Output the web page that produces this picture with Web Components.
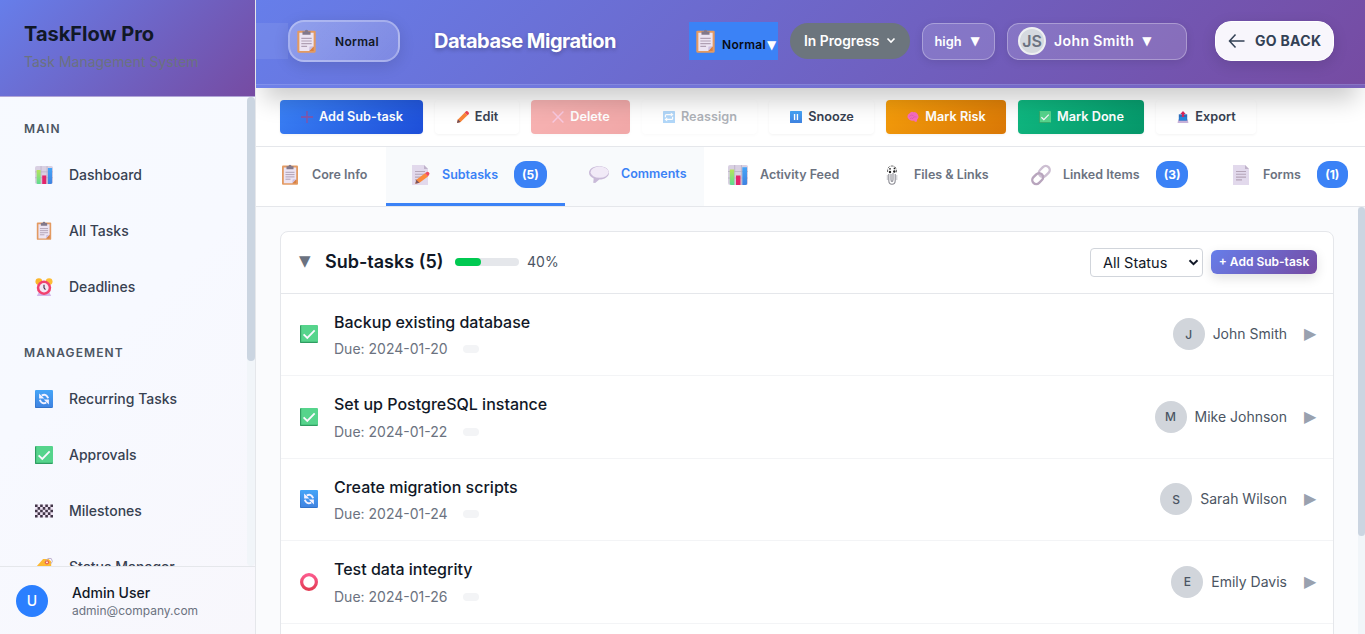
<!DOCTYPE html>
<html lang="en">
<head>
<meta charset="utf-8">
<title>TaskFlow Pro</title>
<style>
html,body{margin:0;height:100%;overflow:hidden}
body{font-family:Inter,"Liberation Sans",sans-serif;color:#111827;background:#fff;-webkit-font-smoothing:antialiased}
</style>
</head>
<body>
<tf-app></tf-app>
<script>
const define = (name, css, html) => customElements.define(name, class extends HTMLElement {
  constructor() {
    super();
    this.attachShadow({mode: 'open'}).innerHTML =
      `<style>*{box-sizing:border-box}${css}</style>` + (typeof html === 'function' ? html(this) : html);
  }
});

const paper = `<path d="M2 0h12l4 4v16H2z" fill="#e2d9ec"/><path d="M14 0l4 4h-4z" fill="#bfb2ca"/><path d="M5 6.5h10M5 9.3h10M5 12.1h10M5 14.9h6" stroke="#b5a5b8" stroke-width="1.1"/>`;
const ICONS = {
  chart: `<rect width="20" height="20" rx="2" fill="#d9d0e2"/><path d="M0 6.5h20M0 13h20M6.7 0v20M13.4 0v20" stroke="#b9b0c4" stroke-width=".8"/><path d="M1.8 4.5h4.4V20H3a1.5 1.5 0 0 1-1.2-1.5z" fill="url(#g1)"/><path d="M8 10.5h4.5V20H8z" fill="#e3246b"/><path d="M14.3 2.2H19V18.5q0 1.5-1.5 1.5h-3.2z" fill="url(#g2)"/>`,
  clip: `<rect x="2" y="0.6" width="16" height="19.2" rx="1" fill="#e39a62"/><path d="M3.8 2.4h12.4v11.8l-3.6 4H3.8z" fill="#ece4f3"/><path d="M16.2 14.2v4h-4z" fill="#d88142"/><path d="M12.3 18.2l.3-3.8 3.6-.2z" fill="#cdbfe0"/><path d="M6.5 1.2h2a1.5 1.5 0 0 1 3 0h2v3h-7z" fill="#82788b"/><path d="M5.5 7.3h9M5.5 9.6h9M5.5 11.9h9M5.5 14.2h5" stroke="#b0a0b4" stroke-width="1"/>`,
  clock: `<path d="M4 16h12l2 4H2z" fill="#d3b7ea"/><circle cx="4.3" cy="4" r="3.8" fill="#fbb62c"/><circle cx="15.7" cy="4" r="3.8" fill="#fdbd35"/><circle cx="10" cy="10.8" r="8" fill="#f2416f"/><circle cx="10" cy="10.8" r="5.2" fill="#f3e7f5"/><path d="M10 7.4v3.6l1.6 1.8" stroke="#45334f" stroke-width="1.3" fill="none"/>`,
  cycle: `<rect width="20" height="20" rx="1.2" fill="url(#g2)"/><path d="M0 1v18q0 1 1 1h18l-1-1H1z" fill="#2b69b9" opacity=".6"/><path d="M7.5 6Q12.8 3.6 14.6 9.2" fill="none" stroke="#f4f2ff" stroke-width="2.2"/><path d="M4.6 3.8v5.6h5.8z" fill="#f4f2ff"/><g transform="rotate(180 10 10)"><path d="M7.5 6Q12.8 3.6 14.6 9.2" fill="none" stroke="#f4f2ff" stroke-width="2.2"/><path d="M4.6 3.8v5.6h5.8z" fill="#f4f2ff"/></g>`,
  check: `<rect width="20" height="20" rx="1.2" fill="#56d48c"/><path d="M0 1v18q0 1 1 1h18l1-1.3H1.3V0z" fill="#2f9c61"/><path d="M4 10.4l4.1 4L16.3 6" fill="none" stroke="#fbf8ff" stroke-width="2"/>`,
  flag: `<rect y="2.8" width="20" height="14.4" fill="#efe4f4"/><path d="M0 4.2h20M0 10h20M0 15.8h20" stroke="#413547" stroke-width="2.9" stroke-dasharray="2.86"/><path d="M2.86 7.1H20M2.86 12.9H20" stroke="#413547" stroke-width="2.9" stroke-dasharray="2.86"/>`,
  tag: `<path d="M2 9l7-8h6l3 3v6l-8 9-8-8z" fill="#fdb932"/><circle cx="13.3" cy="4.8" r="2.4" fill="#e86149"/><circle cx="13.3" cy="4.8" r="1" fill="#fff"/><path d="M12 3Q14-.6 18 .5q3 3.5-.5 6" fill="none" stroke="#b9aacb" stroke-width="1"/>`,
  memo: `${paper}<path d="M5.3 18.8l1-4L15 8.2l3 3.3-8.5 6.3z" fill="#fb8a3c"/><path d="M15 8.2l1.8-1.3q2.2-.5 2.8 1.8L18 11.5z" fill="#f0495f"/><path d="M5.3 18.8l1-4 3.2 3z" fill="#7c5662"/>`,
  page: paper,
  bubble: `<path d="M10 2.2c5.8 0 10 2.7 10 6.6s-4.2 6.8-9.7 6.8L6.2 19l-2-.2.5-4.4C1.7 13.2 0 11.2 0 8.8 0 4.9 4.2 2.2 10 2.2z" fill="#c9bad8"/><ellipse cx="10.6" cy="8.2" rx="9" ry="5.6" fill="#f1eaf7"/>`,
  files: `<path d="M6.8 9v6.500q0 3.800 3.200 3.800t3.200-3.800V9M9 9v5.500q0 2 1 2t1-2V8" fill="none" stroke="#8c8c94" stroke-width="1.100"/><path d="M5.600 7V5Q6 1 10 1q4 0 4.400 4v3" fill="none" stroke="#666" stroke-width="1" stroke-dasharray="2.500 1.200"/><circle cx="8" cy="3.800" r=".9" fill="#222"/><circle cx="12.500" cy="3.400" r=".9" fill="#222"/><circle cx="8" cy="7" r="1.200" fill="#222"/><circle cx="12.300" cy="6.500" r="1.200" fill="#222"/><path d="M5.300 10v5M14.800 10v5" stroke="#b5b5ba" stroke-width=".8"/>`,
  link: `<g fill="none" stroke-width="2.400"><rect x="7.300" y="2.400" width="12" height="8" rx="4" transform="rotate(-45 13.300 6.400)" stroke="#cdbfd2"/><rect x=".700" y="9.600" width="12" height="8" rx="4" transform="rotate(-45 6.700 13.600)" stroke="#b8a5bd"/></g>`,
  plus: `<path d="M10 0v20M0 10h20" stroke="#8f52a0" stroke-width="2.200"/>`,
  pencil: `<path d="M0 20l1.500-6L13 2.500l4.500 4.500L6 18.500z" fill="#fa8537"/><path d="M13 2.500l2-2q2-1 4 1.300t.5 3.700l-2 1.500z" fill="#ee4454"/><path d="M0 20l1.500-6L6 18.500z" fill="#6b4c59"/>`,
  cross: `<path d="M1 1l18 18M19 1L1 19" stroke="#f27ab4" stroke-width="2.400"/>`,
  repeat: `<rect width="20" height="20" rx="1" fill="#3f9cf1"/><path d="M4 10.500V7.500Q4 6 5.500 6H15M16 9.500v3q0 1.500-1.500 1.500H5" fill="none" stroke="#fff" stroke-width="2"/><path d="M13 2.500L17.500 6 13 9.500zM7 10.500L2.500 14 7 17.500z" fill="#fff"/>`,
  pause: `<rect width="20" height="20" rx="1" fill="url(#g2)"/><path d="M7.600 5v10M12.400 5v10" stroke="#fff" stroke-width="2.300"/>`,
  brain: `<path d="M1 11Q0 6 4 4q3-4 7-2 5-1 7 4 3 5-1 8l-1 4h-3l-1-2Q5 18 1 11z" fill="#f66cc0"/><path d="M4 9q3-4 7-1M9 13q2-5 7-3M5 13q3-3 5 0" stroke="#d957b2" stroke-width="1.100" fill="none"/>`,
  export: `<path d="M2 14h16l1 6H1z" fill="#c8b2da"/><path d="M3 5.500h14v10.500H3z" fill="#2f6dbc"/><path d="M4 10h12v5.500H4z" fill="#2687dd"/><path d="M10 0l4.500 5h-2.700V10H8.200V5H5.500z" fill="#d7265e"/>`,
  ring: `<circle cx="10" cy="10" r="8.200" fill="none" stroke="url(#g3)" stroke-width="3.600"/>`
};
const DEFS = `<defs><linearGradient id="g1" x2="0" y2="1"><stop stop-color="#b6e45a"/><stop offset="1" stop-color="#5ddc92"/></linearGradient><linearGradient id="g2" x2="0" y2="1"><stop stop-color="#45a5f8"/><stop offset="1" stop-color="#3f82e0"/></linearGradient><linearGradient id="g3" x2="0" y2="1"><stop stop-color="#fb5a8c"/><stop offset="1" stop-color="#e33d55"/></linearGradient></defs>`;

define('tf-icon', `:host{display:block;flex:none;width:var(--s,18px);height:var(--s,18px)}svg{display:block;width:100%;height:100%;overflow:visible}`,
  el => `<svg viewBox="0 0 20 20">${DEFS}${ICONS[el.getAttribute('name')] || ''}</svg>`);

define('tf-nav-item', `
:host{display:flex;align-items:center;height:48px;margin-bottom:8px;padding-left:35px;font-size:14px;font-weight:500;color:#374151}
tf-icon{margin-right:16px}
span{padding-bottom:1px}`,
  el => `<tf-icon name="${el.getAttribute('icon')}"></tf-icon><span><slot></slot></span>`);

define('tf-nav-section', `
:host{display:block}
h3{margin:0;height:56px;padding:11px 0 0 24px;display:flex;align-items:center;font-size:12px;font-weight:600;letter-spacing:1.1px;color:#4b5563}`,
  el => `<h3>${el.getAttribute('label')}</h3><slot></slot>`);

define('tf-sidebar', `
:host{display:flex;flex-direction:column;flex:none;width:256px;height:100%;border-right:1px solid #e5e7eb;background:linear-gradient(135deg,#f7faff 0%,#f7f9ff 50%,#f8f7fc 100%)}
header{flex:none;height:97px;padding:20px 24px 0;border-bottom:1px solid #b1a5d6;background:linear-gradient(135deg,#667eea,#764ba2)}
h1{margin:0;font-size:20px;line-height:28px;font-weight:700;color:#111827}
header p{margin:4px 0 0;font-size:14px;line-height:20px;color:#6b7280}
.body{flex:1;min-height:0;display:flex;overflow:hidden}
nav{flex:1;margin-top:-2px}
.track{width:8px;background:#f1f5f9;border-radius:4px}
.thumb{height:264px;border-radius:4px;background:#cbd5e1}
footer{flex:none;height:68px;border-top:1px solid #e5e7eb;padding:0 16px;display:flex;align-items:center;gap:24px}
.av{width:32px;height:32px;border-radius:50%;background:#2b7fff;color:#fff;display:flex;align-items:center;justify-content:center;font-size:14px;font-weight:500}
.n{font-size:14px;line-height:20px;font-weight:500}.e{font-size:12px;line-height:16px;color:#6b7280}`,
`<header><h1>TaskFlow Pro</h1><p>Task Management System</p></header>
<div class="body"><nav>
<tf-nav-section label="MAIN"><tf-nav-item icon="chart">Dashboard</tf-nav-item><tf-nav-item icon="clip">All Tasks</tf-nav-item><tf-nav-item icon="clock">Deadlines</tf-nav-item></tf-nav-section>
<tf-nav-section label="MANAGEMENT"><tf-nav-item icon="cycle">Recurring Tasks</tf-nav-item><tf-nav-item icon="check">Approvals</tf-nav-item><tf-nav-item icon="flag">Milestones</tf-nav-item><tf-nav-item icon="tag">Status Manager</tf-nav-item></tf-nav-section>
</nav><div class="track"><div class="thumb"></div></div></div>
<footer><div class="av">U</div><div><div class="n">Admin User</div><div class="e">admin@company.com</div></div></footer>`);

define('tf-header', `
:host{display:flex;align-items:center;flex:none;height:88px;padding-bottom:6px;position:relative;z-index:2;color:#fff;background:linear-gradient(135deg,#667eea,#764ba2);box-shadow:0 20px 25px -8px rgba(0,0,0,.2)}
:host::after{content:"";position:absolute;left:0;right:0;bottom:0;height:3px;background:rgba(130,145,245,.3);border-top:1px solid rgba(255,255,255,.12)}
.band{width:32px;height:36px;background:rgba(255,255,255,.08)}
.type{width:112px;height:42px;border:2px solid rgba(255,255,255,.3);border-radius:16px;background:linear-gradient(135deg,rgba(255,255,255,.28),rgba(255,255,255,.14));box-shadow:0 4px 16px rgba(0,0,0,.12);display:flex;align-items:center;padding-left:5px;color:#111827;font-size:12px;font-weight:600;letter-spacing:.3px}
.type tf-icon{--s:23px;margin-right:17px}
h2{margin:0 0 0 34px;width:255px;font-size:20px;line-height:28px;font-weight:700;letter-spacing:-.5px;white-space:nowrap;text-shadow:0 2px 4px rgba(0,0,0,.25)}
.sel{width:89px;height:38px;background:#3b82f6;display:flex;align-items:center;padding-left:5px;color:#080b14;font-size:12px;font-weight:600;letter-spacing:.3px}
.sel tf-icon{--s:23px;margin-right:5px}.sel span{padding-top:7px}
.tri{font-family:"DejaVu Sans",sans-serif;color:#fff;font-size:12px;font-weight:400;letter-spacing:0;line-height:12px}
.sel .tri{margin-left:1px}
.status{margin-left:12px;width:120px;height:36px;border-radius:18px;background:#6c757d;display:flex;align-items:center;padding:0 14px 1px;justify-content:space-between;font-size:13.8px;font-weight:600}
.glass{height:37px;border:1px solid rgba(255,255,255,.3);border-radius:12px;background:rgba(255,255,255,.15);box-shadow:0 2px 8px rgba(0,0,0,.1);display:flex;align-items:center;font-weight:600}
.pri{margin-left:12px;width:73px;padding-left:11.5px;font-size:12.8px}.pri .tri{margin-left:9px}
.who{margin-left:12px;width:180px;padding-left:10px;font-size:14px;letter-spacing:.4px}.who .tri{margin-left:8px}
.av{width:28px;height:28px;border-radius:50%;border:2px solid rgba(255,255,255,.6);background:#d5d9df;color:#6b7280;display:flex;align-items:center;justify-content:center;font-size:16px;margin-right:8px;letter-spacing:-.2px}
.who span:not(.tri),.back span{padding-bottom:1px}
.back{margin-left:28px;width:119px;height:40px;border-radius:16px;background:#f8f6fc;border:1px solid #fff;box-shadow:0 4px 15px rgba(0,0,0,.12);display:flex;align-items:center;padding-left:12px;gap:9px;color:#334155;font-size:14px;font-weight:700;letter-spacing:.3px;white-space:nowrap}`,
`<div class="band"></div>
<div class="type"><tf-icon name="clip"></tf-icon>Normal</div>
<h2>Database Migration</h2>
<div class="sel"><tf-icon name="clip"></tf-icon><span>Normal</span><span class="tri">▼</span></div>
<div class="status">In Progress<svg width="10" height="7" viewBox="0 0 10 7"><path d="M1.5 1.5L5 5l3.5-3.5" fill="none" stroke="#fff" stroke-width="1.6"/></svg></div>
<div class="glass pri">high<span class="tri">▼</span></div>
<div class="glass who"><div class="av">JS</div><span>John Smith</span><span class="tri">▼</span></div>
<div class="back"><svg width="18" height="16" viewBox="0 0 18 16"><path d="M7.5 1.5L1.500 8l6 6.500M1.500 8H16.500" fill="none" stroke="#334155" stroke-width="1.5"/></svg><span>GO BACK</span></div>`);

define('tf-action', `
:host{display:flex;align-items:center;justify-content:center;gap:6px;height:34px;padding-left:1px;border-radius:4px;font-size:12.7px;font-weight:600;color:#374151;background:rgba(255,255,255,.35);box-shadow:0 1px 3px rgba(0,0,0,.05);white-space:nowrap}
:host([kind]){color:#fff}
:host([kind=blue]){background:linear-gradient(135deg,#3b82f6,#1d4ed8)}
:host([kind=red]){background:linear-gradient(135deg,#ef4444,#dc2626)}
:host([kind=amber]){background:linear-gradient(135deg,#f59e0b,#d97706)}
:host([kind=green]){background:linear-gradient(135deg,#10b981,#059669)}
:host([kind=red]),:host([off]){opacity:.4}
span{padding-bottom:1px}
tf-icon{--s:12px}`,
  el => `<tf-icon name="${el.getAttribute('icon')}"></tf-icon><span><slot></slot></span>`);

define('tf-toolbar', `
:host{display:flex;flex:none;height:59px;padding:12px 24px 0;gap:12px;background:#fff;border-bottom:1px solid #e5e7eb}`,
`<tf-action kind="blue" icon="plus" style="width:143px">Add Sub-task</tf-action>
<tf-action icon="pencil" style="width:84px">Edit</tf-action>
<tf-action kind="red" icon="cross" style="width:99px">Delete</tf-action>
<tf-action off icon="repeat" style="width:115px">Reassign</tf-action>
<tf-action icon="pause" style="width:105px">Snooze</tf-action>
<tf-action kind="amber" icon="brain" style="width:120px">Mark Risk</tf-action>
<tf-action kind="green" icon="check" style="width:126px">Mark Done</tf-action>
<tf-action icon="export" style="width:100px">Export</tf-action>`);

define('tf-tab', `
:host{display:flex;flex:none;align-items:center;height:59px;padding:0 0 3px 24px;font-size:12.5px;font-weight:600;color:#6b7280;white-space:nowrap}
:host([on]),:host([hot]){background:#f8fafc;color:#3b82f6}
:host([on]){box-shadow:inset 0 -3px #3b82f6}
:host([hot]){padding-bottom:5px}
tf-icon{--s:20px;margin-right:12px}
span{padding-bottom:1px}
b{margin:0 0 2px 16px;height:27px;min-width:31px;padding:0 8px;border-radius:12px;background:#3b82f6;color:#fff;font-size:12px;font-weight:700;display:flex;align-items:center;justify-content:center}`,
  el => `<tf-icon name="${el.getAttribute('icon')}"></tf-icon><span><slot></slot></span>${el.hasAttribute('count') ? `<b>(${el.getAttribute('count')})</b>` : ''}`);

define('tf-tabs', `:host{display:flex;flex:none;height:60px;background:#fff;border-bottom:1px solid #e5e7eb;position:relative;z-index:3}`,
`<tf-tab icon="clip" style="width:130px">Core Info</tf-tab>
<tf-tab on icon="memo" count="5" style="width:179px">Subtasks</tf-tab>
<tf-tab hot icon="bubble" style="width:139px">Comments</tf-tab>
<tf-tab icon="chart" style="width:154px">Activity Feed</tf-tab>
<tf-tab icon="files" style="width:149px">Files &amp; Links</tf-tab>
<tf-tab icon="link" count="3" style="width:200px">Linked Items</tf-tab>
<tf-tab icon="page" count="1">Forms</tf-tab>`);

define('tf-subtask', `
:host{display:flex;align-items:center;height:82.5px;padding:0 15px 0 19px;border-bottom:1px solid #f3f4f6}
.t{flex:1;margin-left:16px}
.a{font-size:16px;line-height:24px;font-weight:500;color:#111827}
.d{margin-top:5.5px;display:flex;align-items:center;gap:15.5px;font-size:14px;line-height:20px;color:#6b7280}
i{width:16px;height:8px;border-radius:4px;background:#f3f4f6}
.av{width:32px;height:32px;border-radius:50%;background:#d1d5db;color:#4b5563;font-size:12px;font-weight:500;display:flex;align-items:center;justify-content:center;margin-right:8px}
.w{font-size:14px;line-height:20px;color:#4b5563}
.go{width:14px;margin-left:17px;font:16px/16px "DejaVu Sans",sans-serif;color:#99a1af}`,
  el => `<tf-icon name="${el.getAttribute('icon')}"></tf-icon><div class="t"><div class="a"><slot></slot></div><div class="d">Due: ${el.getAttribute('due')}<i></i></div></div>
<div class="av">${el.getAttribute('who')[0]}</div><div class="w">${el.getAttribute('who')}</div><div class="go">▶&#xFE0E;</div>`);

define('tf-card', `
:host{display:block;margin:24px 24px 0;width:1054px;height:500px;border:1px solid #e5e7eb;border-radius:8px;background:#fff}
header{height:61.6px;border-bottom:1px solid #e5e7eb;display:flex;align-items:center;padding:0 16px 1px}
.tri{width:28px;padding-left:2px;font:15px/16px "DejaVu Sans",sans-serif;color:#6b7280;margin-bottom:2px}
h3{margin:0;width:130px;font-size:18px;line-height:28px;font-weight:600;white-space:nowrap}
.bar{width:64px;height:8px;border-radius:4px;background:#e5e7eb}.bar div{width:26px;height:8px;border-radius:4px;background:#00c951}
.pc{flex:1;margin-left:8px;font-size:14px;line-height:20px;color:#4b5563}
.sel{margin-top:2px;width:113px;height:29px;border:1px solid #d1d5db;border-radius:4px;display:flex;align-items:center;justify-content:space-between;padding:0 3px 0 12px;font-size:14.5px}
.btn{margin-left:8px;width:106px;height:24px;border-radius:6px;background:linear-gradient(135deg,#667eea,#764ba2);box-shadow:0 4px 12px rgba(0,0,0,.12);color:#fff;font-size:12px;font-weight:600;display:flex;align-items:center;justify-content:center;white-space:nowrap}`,
`<header><div class="tri">▼</div><h3>Sub-tasks (5)</h3><div class="bar"><div></div></div><div class="pc">40%</div>
<div class="sel">All Status<svg width="11" height="7" viewBox="0 0 11 7"><path d="M1.5 1.2l4 4 4-4" fill="none" stroke="#111827" stroke-width="2"/></svg></div>
<div class="btn">+ Add Sub-task</div></header>
<tf-subtask icon="check" due="2024-01-20" who="John Smith">Backup existing database</tf-subtask>
<tf-subtask icon="check" due="2024-01-22" who="Mike Johnson">Set up PostgreSQL instance</tf-subtask>
<tf-subtask icon="cycle" due="2024-01-24" who="Sarah Wilson">Create migration scripts</tf-subtask>
<tf-subtask icon="ring" due="2024-01-26" who="Emily Davis">Test data integrity</tf-subtask>`);

define('tf-app', `
:host{display:flex;width:1365px;height:634px;overflow:hidden}
main{flex:1;min-width:0;display:flex;flex-direction:column;overflow:hidden}
.body{flex:1;min-height:0;display:flex;justify-content:space-between;background:#fafbfd;overflow:hidden}
.track{width:7px;background:#f1f5f9}.thumb{height:329px;background:#cbd5e1;border-radius:4px}`,
`<tf-sidebar></tf-sidebar><main><tf-header></tf-header><tf-toolbar></tf-toolbar><tf-tabs></tf-tabs>
<div class="body"><tf-card></tf-card><div class="track"><div class="thumb"></div></div></div></main>`);
</script>
</body>
</html>
